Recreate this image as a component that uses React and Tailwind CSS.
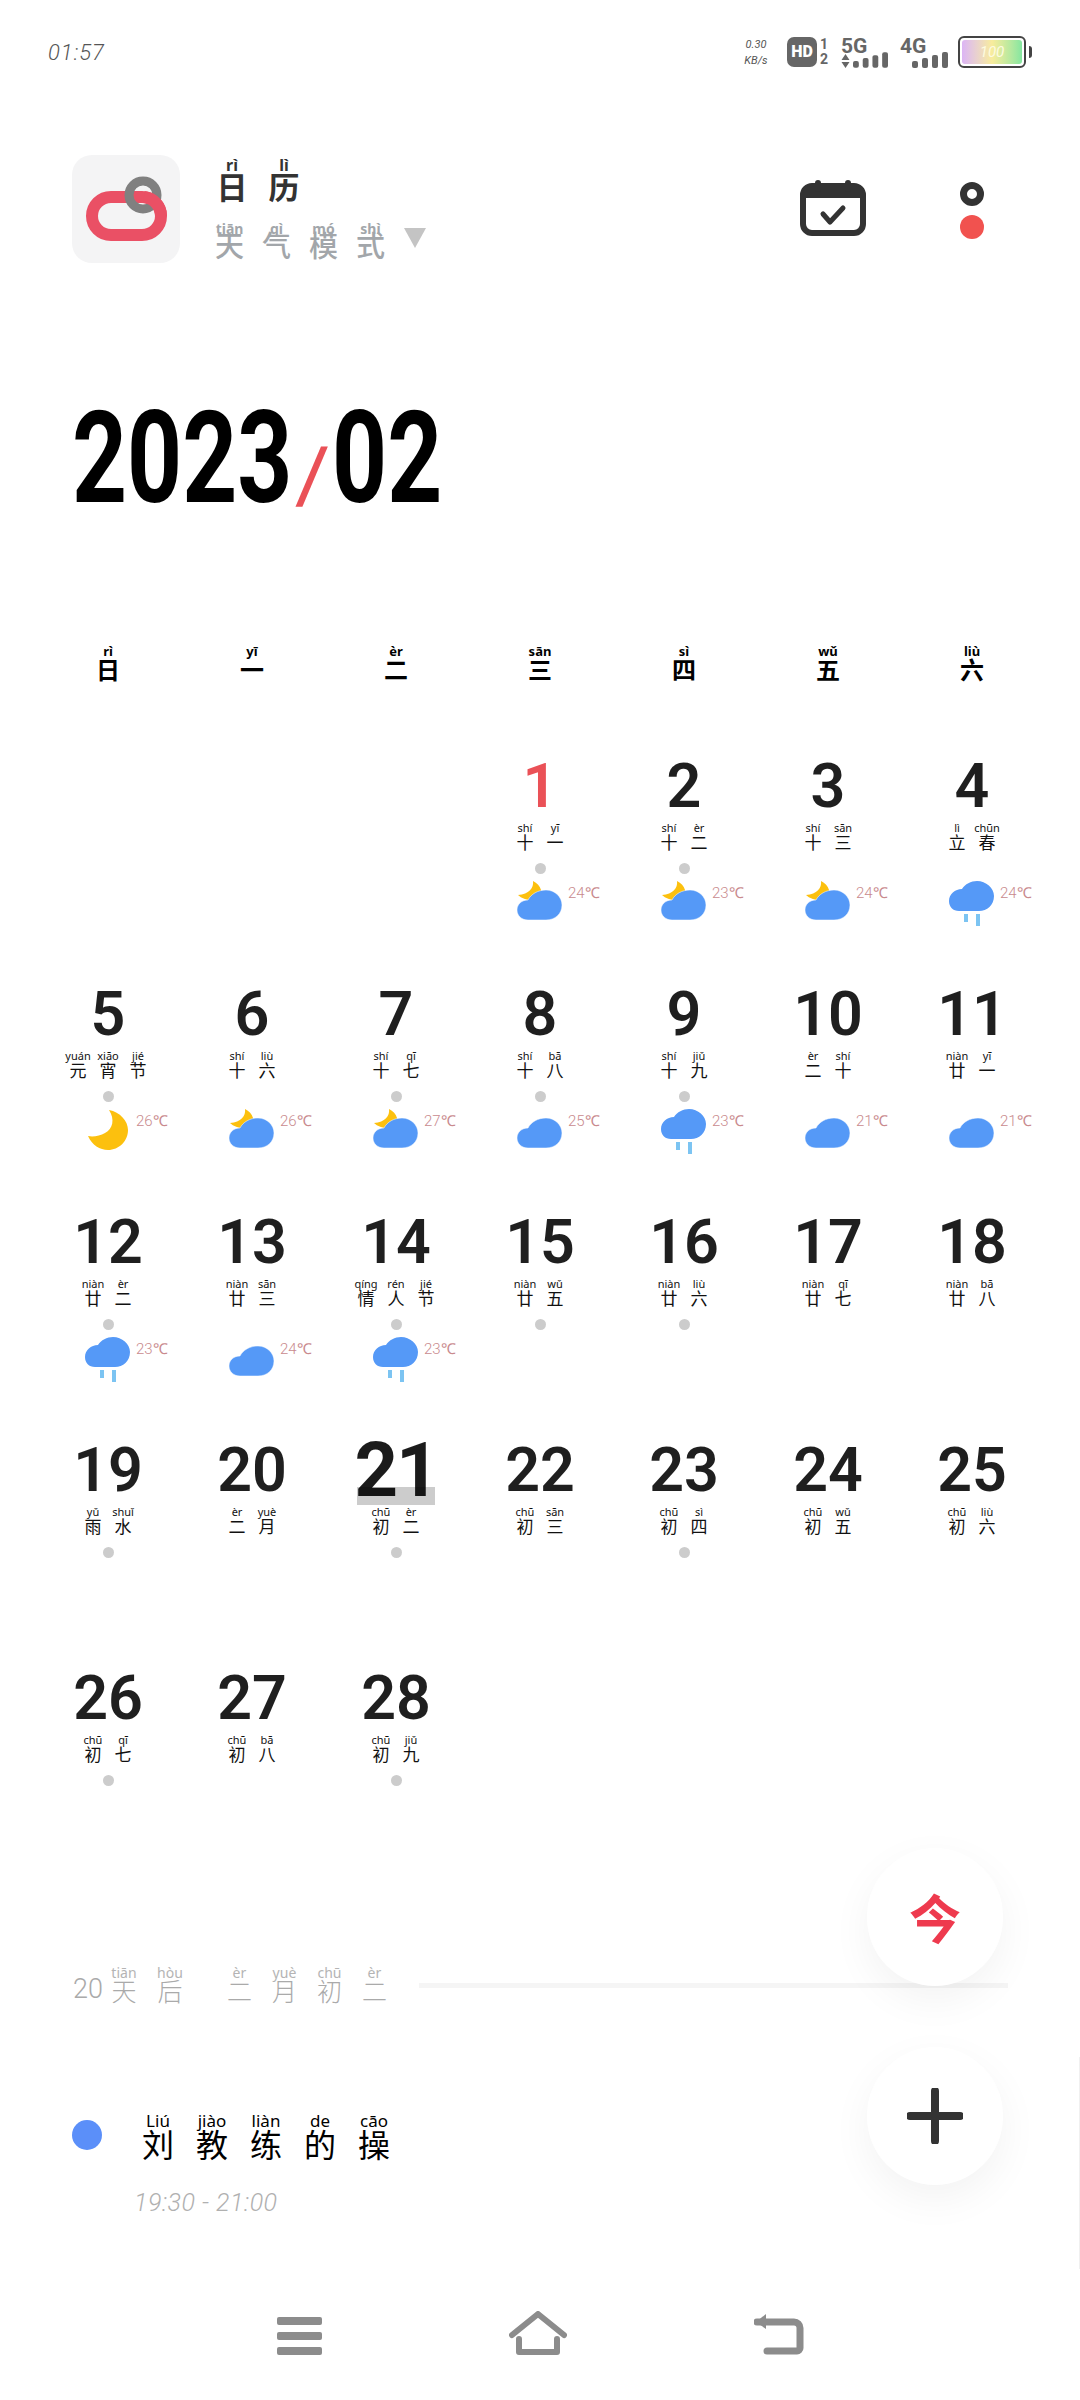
const CJK = "font-['Noto_Sans_CJK_SC',sans-serif]"

const days = [
  { d: 1, l: [['shí', '十'], ['yī', '一']], dot: true, w: 'mooncloud', t: 24, red: true },
  { d: 2, l: [['shí', '十'], ['èr', '二']], dot: true, w: 'mooncloud', t: 23 },
  { d: 3, l: [['shí', '十'], ['sān', '三']], w: 'mooncloud', t: 24 },
  { d: 4, l: [['lì', '立'], ['chūn', '春']], w: 'rain', t: 24 },
  { d: 5, l: [['yuán', '元'], ['xiāo', '宵'], ['jié', '节']], dot: true, w: 'moon', t: 26 },
  { d: 6, l: [['shí', '十'], ['liù', '六']], w: 'mooncloud', t: 26 },
  { d: 7, l: [['shí', '十'], ['qī', '七']], dot: true, w: 'mooncloud', t: 27 },
  { d: 8, l: [['shí', '十'], ['bā', '八']], dot: true, w: 'cloud', t: 25 },
  { d: 9, l: [['shí', '十'], ['jiǔ', '九']], dot: true, w: 'rain', t: 23 },
  { d: 10, l: [['èr', '二'], ['shí', '十']], w: 'cloud', t: 21 },
  { d: 11, l: [['niàn', '廿'], ['yī', '一']], w: 'cloud', t: 21 },
  { d: 12, l: [['niàn', '廿'], ['èr', '二']], dot: true, w: 'rain', t: 23 },
  { d: 13, l: [['niàn', '廿'], ['sān', '三']], w: 'cloud', t: 24 },
  { d: 14, l: [['qíng', '情'], ['rén', '人'], ['jié', '节']], dot: true, w: 'rain', t: 23 },
  { d: 15, l: [['niàn', '廿'], ['wǔ', '五']], dot: true },
  { d: 16, l: [['niàn', '廿'], ['liù', '六']], dot: true },
  { d: 17, l: [['niàn', '廿'], ['qī', '七']] },
  { d: 18, l: [['niàn', '廿'], ['bā', '八']] },
  { d: 19, l: [['yǔ', '雨'], ['shuǐ', '水']], dot: true },
  { d: 20, l: [['èr', '二'], ['yuè', '月']] },
  { d: 21, l: [['chū', '初'], ['èr', '二']], dot: true, today: true },
  { d: 22, l: [['chū', '初'], ['sān', '三']] },
  { d: 23, l: [['chū', '初'], ['sì', '四']], dot: true },
  { d: 24, l: [['chū', '初'], ['wǔ', '五']] },
  { d: 25, l: [['chū', '初'], ['liù', '六']] },
  { d: 26, l: [['chū', '初'], ['qī', '七']], dot: true },
  { d: 27, l: [['chū', '初'], ['bā', '八']] },
  { d: 28, l: [['chū', '初'], ['jiǔ', '九']], dot: true },
]

const weekdays = [['rì', '日'], ['yī', '一'], ['èr', '二'], ['sān', '三'], ['sì', '四'], ['wǔ', '五'], ['liù', '六']]

// one hanzi with its pinyin stacked on top
function Ruby({ py, ch, box, pyCls, chCls }) {
  return (
    <span className={`flex flex-col items-center shrink-0 ${box}`}>
      <span className={`whitespace-nowrap leading-none font-['Noto_Sans',sans-serif] ${pyCls}`}>{py}</span>
      <span className={`whitespace-nowrap leading-none ${CJK} ${chCls}`}>{ch}</span>
    </span>
  )
}

function Weather({ type }) {
  if (type === 'moon') {
    return (
      <svg width="45" height="45" viewBox="0 0 45 45">
        <path d="M24 1C30 10 28 20 20 24C15 27 8 28 3 27C7 36 15 41 23 41C34 41 43 32 43 21C43 12 35 3 24 1Z" fill="#fcc00e" />
      </svg>
    )
  }
  if (type === 'rain') {
    return (
      <svg width="45" height="45" viewBox="0 0 45 45">
        <path d="M10 30C4 30 0 26 0 20C0 13 6 8 13 8C16 3 22 0 28 0C37 0 45 7 45 15C45 24 38 30 30 30Z" fill="#5599f7" />
        <rect x="15" y="33" width="4" height="8" fill="#7cc4f2" />
        <rect x="27" y="33" width="4" height="12" fill="#7cc4f2" />
      </svg>
    )
  }
  return (
    <svg width="45" height="45" viewBox="0 0 45 45">
      {type === 'mooncloud' && <path d="M16 0C17 7 12 13 1 14C5 18 12 20 18 19C23 17 25 12 24 9C23 5 20 2 16 0Z" fill="#fcc00e" />}
      <path d="M11 39C5 39 0 35 0 29C0 23 5 19 11 19C14 13 21 9 29 9C38 9 45 16 45 24C45 33 38 39 29 39Z" fill="#5599f7" stroke="#fff" strokeWidth="0.5" />
    </svg>
  )
}

function DayCell({ day }) {
  return (
    <div className="flex flex-col h-[228px]">
      <div className="relative h-[80px] flex items-center justify-center">
        <span className={day.today
          ? "font-['Roboto',sans-serif] font-bold text-[76px] leading-none tracking-[-2px] text-[#1b1b1b]"
          : `font-['Roboto',sans-serif] font-semibold text-[61px] leading-none ${day.red ? 'text-[#ea5157]' : 'text-[#1f1f1f]'}`}>
          {day.d}
        </span>
        {day.today && <span className="absolute left-[33px] top-[57px] w-[78px] h-[18px] bg-black/20" />}
      </div>
      <div className="flex justify-center mt-[-4px]">
        {day.l.map(([py, ch], i) => (
          <Ruby key={i} py={py} ch={ch} box="w-[30px]" pyCls="text-[11px] text-[#111]" chCls="text-[17px] text-[#111]" />
        ))}
      </div>
      <div className={`self-center mt-[13px] w-[11px] h-[11px] rounded-full ${day.dot ? 'bg-[#cccccc]' : ''}`} />
      {day.w && (
        <div className="flex items-start pl-[49px] mt-[7px]">
          <Weather type={day.w} />
          <span className="ml-[6px] mt-[5px] font-['Roboto',sans-serif] font-light text-[15px] leading-none whitespace-nowrap text-[#c98a8e]">{day.t}℃</span>
        </div>
      )}
    </div>
  )
}

function Bars({ w }) {
  return (
    <svg width={w} height="16" viewBox="0 0 36 16">
      <rect x="0" y="9" width="6" height="7" rx="2" fill="#666" />
      <rect x="10" y="6" width="6" height="10" rx="2" fill="#666" />
      <rect x="20" y="3" width="6" height="13" rx="2" fill="#666" />
      <rect x="30" y="0" width="6" height="16" rx="2" fill="#666" />
    </svg>
  )
}

function StatusBar() {
  return (
    <div className="flex items-center justify-between h-[100px] pt-[4px] px-[48px]">
      <span className="font-['Roboto',sans-serif] font-light italic text-[22px] tracking-[1px] text-[#555]">01:57</span>
      <div className="flex items-center font-['Roboto',sans-serif] text-[#666]">
        <div className="flex flex-col items-center gap-[5px] w-[24px] mr-[19px] italic text-[11px] leading-none text-[#555]">
          <span>0.30</span>
          <span>KB/s</span>
        </div>
        <div className="w-[30px] h-[30px] rounded-[7px] bg-[#666] flex items-center justify-center text-white font-black text-[16px] leading-none">HD</div>
        <div className="flex flex-col items-center w-[8px] ml-[3px] font-bold text-[14px] leading-[15px]">
          <span>1</span>
          <span>2</span>
        </div>
        <div className="flex flex-col ml-[13px] w-[47px]">
          <span className="font-bold text-[21px] leading-[18px]">5G</span>
          <div className="flex items-end justify-between mt-[-3px]">
            <svg width="9" height="14" viewBox="0 0 9 14">
              <path d="M4.500 0l4 6h-8zM0.500 8h8l-4 6z" fill="#666" />
            </svg>
            <Bars w="35" />
          </div>
        </div>
        <div className="flex flex-col ml-[12px] w-[48px]">
          <span className="font-bold text-[21px] leading-[18px]">4G</span>
          <div className="flex justify-end mt-[-3px]"><Bars w="36" /></div>
        </div>
        <div className="ml-[10px] w-[68px] h-[32px] rounded-[6px] border-2 border-[#444] p-[2px]">
          <div className="h-full rounded-[3px] bg-linear-to-r from-[#dcb4f5] via-[#f8ec9c] to-[#84e6a0] flex items-center justify-center italic text-[15px] leading-none text-[#fdfbe0]">100</div>
        </div>
        <span className="ml-[3px] w-[3px] h-[12px] rounded-r-[3px] bg-[#444]" />
      </div>
    </div>
  )
}

function AppHeader() {
  return (
    <div className="flex items-start mt-[55px] pl-[72px]">
      <div className="w-[108px] h-[108px] rounded-[20px] bg-[#f4f4f5] flex items-center justify-center">
        <svg width="108" height="108" viewBox="0 0 108 108">
          <rect x="20" y="42" width="69" height="38" rx="19" fill="none" stroke="#ea5065" strokeWidth="12" />
          <circle cx="71" cy="40" r="14" fill="none" stroke="#808080" strokeWidth="9" />
          <path d="M72 42a19 19 0 0 1 17 19" fill="none" stroke="#ea5065" strokeWidth="12" />
        </svg>
      </div>
      <div className="ml-[26px] flex flex-col">
        <div className="flex mt-[2px]">
          <Ruby py="rì" ch="日" box="w-[52px]" pyCls="text-[16px] font-bold text-[#333]" chCls="text-[31px] font-bold text-[#333] mt-[-3px]" />
          <Ruby py="lì" ch="历" box="w-[52px]" pyCls="text-[16px] font-bold text-[#333]" chCls="text-[31px] font-bold text-[#333] mt-[-3px]" />
        </div>
        <div className="flex items-start mt-[21px]">
          {[['tiān', '天'], ['qì', '气'], ['mó', '模'], ['shì', '式']].map(([py, ch]) => (
            <Ruby key={ch} py={py} ch={ch} box="w-[47px]" pyCls="text-[14px] font-bold text-[#a2a6aa]" chCls="text-[29px] font-medium text-[#a2a6aa] mt-[-6px]" />
          ))}
          <svg width="24" height="21" viewBox="0 0 24 21" className="ml-[9px] mt-[5px]">
            <path d="M1 1h22L12 21z" fill="#c4c4c4" />
          </svg>
        </div>
      </div>
      <div className="ml-auto flex items-start pr-[96px]">
        <svg width="66" height="56" viewBox="0 0 66 56" className="mt-[25px] mr-[94px]">
          <rect x="3" y="6" width="60" height="47" rx="9" fill="none" stroke="#333" strokeWidth="6" />
          <path d="M3 18V13a7 7 0 0 1 7-7h46a7 7 0 0 1 7 7v5z" fill="#333" />
          <rect x="15" y="0" width="6" height="12" rx="3" fill="#333" />
          <rect x="45" y="0" width="6" height="12" rx="3" fill="#333" />
          <path d="M23 34l7 8l13-14" fill="none" stroke="#333" strokeWidth="5" strokeLinecap="round" strokeLinejoin="round" />
        </svg>
        <div className="flex flex-col items-center gap-[9px] mt-[27px]">
          <span className="w-[24px] h-[24px] rounded-full border-[7px] border-[#333]" />
          <span className="w-[24px] h-[24px] rounded-full bg-[#f1524f]" />
        </div>
      </div>
    </div>
  )
}

function UpcomingRow() {
  const a = [['tiān', '天'], ['hòu', '后']]
  const b = [['èr', '二'], ['yuè', '月'], ['chū', '初'], ['èr', '二']]
  const py = 'text-[14px] text-[#b4b4b4]'
  const ch = 'text-[25px] font-light text-[#aaa] mt-[-2px]'
  return (
    <div className="flex items-end pl-[73px] pr-[72px]">
      <span className="font-['Roboto',sans-serif] font-light text-[27px] leading-none text-[#aaa] mr-[-2px]">20</span>
      {a.map(([p, c]) => <Ruby key={c} py={p} ch={c} box="w-[46px]" pyCls={py} chCls={ch} />)}
      <span className="w-[24px]" />
      {b.map(([p, c], i) => <Ruby key={i} py={p} ch={c} box="w-[45px]" pyCls={py} chCls={ch} />)}
      <div className="flex-1 ml-[22px] h-[5px] bg-[#f5f5f5] mb-[15px]" />
    </div>
  )
}

function EventRow() {
  const chars = [['Liú', '刘'], ['jiào', '教'], ['liàn', '练'], ['de', '的'], ['cāo', '操']]
  return (
    <div className="pl-[72px] mt-[109px]">
      <div className="flex items-start">
        <span className="w-[30px] h-[30px] mt-[8px] rounded-full bg-[#5b8ff9]" />
        <div className="flex ml-[29px]">
          {chars.map(([p, c]) => (
            <Ruby key={c} py={p} ch={c} box="w-[54px]" pyCls="text-[17px] text-black" chCls="text-[32px] text-black mt-[-2px]" />
          ))}
        </div>
      </div>
      <p className="ml-[62px] mt-[31px] font-['Roboto',sans-serif] font-light italic text-[25px] leading-none text-[#b0b0b0] tracking-[0.5px]">19:30 - 21:00</p>
    </div>
  )
}

function NavBar() {
  return (
    <div className="flex items-end justify-center h-[50px]">
      <svg width="46" height="38" viewBox="0 0 46 38">
        <rect x="0" y="0" width="45" height="8" rx="2" fill="#8c8c8c" />
        <rect x="0" y="15" width="45" height="8" rx="2" fill="#8c8c8c" />
        <rect x="0" y="30" width="45" height="8" rx="2" fill="#8c8c8c" />
      </svg>
      <svg width="58" height="44" viewBox="0 0 58 44" className="ml-[186px]">
        <path d="M3 24L29 3l26 21M10 28v13h38V28" fill="none" stroke="#8c8c8c" strokeWidth="6" strokeLinejoin="round" strokeLinecap="round" />
      </svg>
      <svg width="50" height="42" viewBox="0 0 50 42" className="ml-[187px]">
        <path d="M3 9h37a6 6 0 0 1 6 6v20a3 3 0 0 1-3 3H13" fill="none" stroke="#8c8c8c" strokeWidth="7" strokeLinecap="round" />
        <path d="M12 1L2 9l10 7z" fill="#8c8c8c" />
      </svg>
    </div>
  )
}

export default function App() {
  return (
    <div className="relative w-[1080px] h-[2400px] bg-white overflow-hidden">
      <StatusBar />
      <AppHeader />

      <h1 className="ml-[72px] mt-[130px] h-[130px] flex items-baseline origin-left scale-x-[0.75] font-['Roboto',sans-serif] font-bold text-[128px] leading-[130px] text-black">
        <span>2023</span>
        <span className="w-[53px] text-center inline-block text-[78px] font-black -skew-x-[14deg] text-[#ea5157]">/</span>
        <span>02</span>
      </h1>

      <div className="grid grid-cols-7 px-[36px] mt-[122px]">
        {weekdays.map(([py, ch]) => (
          <div key={ch} className="flex justify-center">
            <Ruby py={py} ch={ch} box="w-[40px]" pyCls="text-[13px] font-bold text-black" chCls="text-[24px] font-bold text-black mt-[-1px]" />
          </div>
        ))}
      </div>

      <div className="grid grid-cols-7 px-[36px] mt-[65px]">
        <div className="col-start-4"><DayCell day={days[0]} /></div>
        {days.slice(1).map((d) => <DayCell key={d.d} day={d} />)}
      </div>

      <div className="mt-[80px]"><UpcomingRow /></div>
      <EventRow />
      <div className="mt-[90px]"><NavBar /></div>

      <button className="absolute left-[867px] top-[1848px] w-[136px] h-[138px] rounded-full bg-white shadow-[0_14px_40px_rgba(0,0,0,0.05)] flex items-center justify-center font-['Noto_Sans_CJK_SC',sans-serif] font-bold text-[52px] leading-none text-[#ee3a4e]">今</button>
      <button className="absolute left-[867px] top-[2047px] w-[136px] h-[138px] rounded-full bg-white shadow-[0_14px_40px_rgba(0,0,0,0.05)] flex items-center justify-center">
        <svg width="56" height="56" viewBox="0 0 56 56">
          <path d="M28 3v50M3 28h50" stroke="#333" strokeWidth="8" strokeLinecap="round" />
        </svg>
      </button>
      <div className="absolute right-0 top-[2057px] w-px h-[212px] bg-[#f0f0f0]" />
    </div>
  )
}
